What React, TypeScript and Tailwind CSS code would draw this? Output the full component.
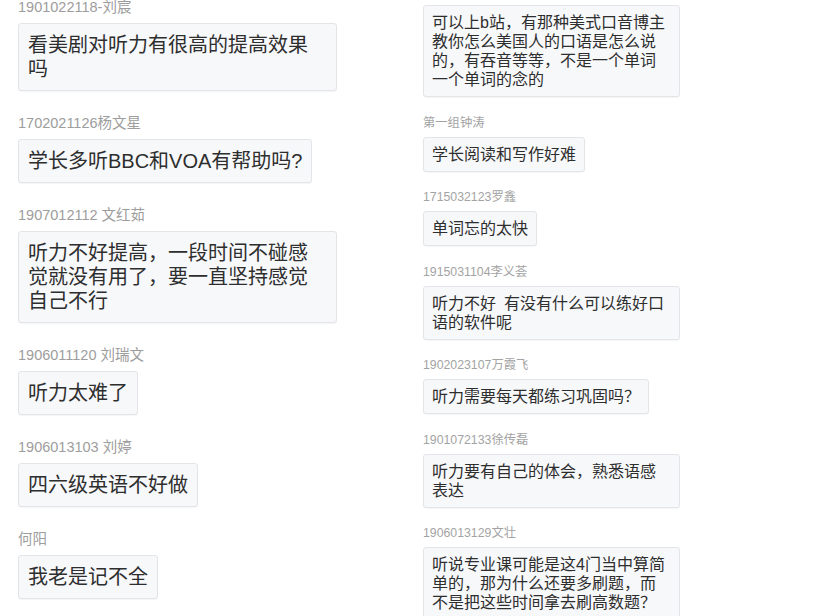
import React from "react";

const FONT = { fontFamily: '"Liberation Sans", "Noto Sans CJK SC", sans-serif' };

const left: { label: string; text: string }[] = [
  { label: "1901022118-刘宸", text: "看美剧对听力有很高的提高效果吗" },
  { label: "1702021126杨文星", text: "学长多听BBC和VOA有帮助吗?" },
  { label: "1907012112 文红茹", text: "听力不好提高，一段时间不碰感觉就没有用了，要一直坚持感觉自己不行" },
  { label: "1906011120 刘瑞文", text: "听力太难了" },
  { label: "1906013103 刘婷", text: "四六级英语不好做" },
  { label: "何阳", text: "我老是记不全" },
];

const right: { label?: string; text: string }[] = [
  { text: "可以上b站，有那种美式口音博主教你怎么美国人的口语是怎么说的，有吞音等等，不是一个单词一个单词的念的" },
  { label: "第一组钟涛", text: "学长阅读和写作好难" },
  { label: "1715032123罗鑫", text: "单词忘的太快" },
  { label: "1915031104李义荟", text: "听力不好\u2002有没有什么可以练好口语的软件呢" },
  { label: "1902023107万霞飞", text: "听力需要每天都练习巩固吗？" },
  { label: "1901072133徐传磊", text: "听力要有自己的体会，熟悉语感表达" },
  { label: "1906013129文壮", text: "听说专业课可能是这4门当中算简单的，那为什么还要多刷题，而不是把这些时间拿去刷高数题？" },
];

export default function App() {
  return (
    <div className="flex h-[616px] w-[821px] overflow-hidden bg-white" style={FONT}>
      <div className="flex w-[423px] shrink-0 flex-col pl-[18px] -mt-[3px]">
        {left.map((m, i) => (
          <div key={i} className="mb-[22px] flex flex-col items-start">
            <div className="mb-[6px] h-[20px] text-[14.5px] leading-[20px] text-[#9d9d9d] whitespace-nowrap">
              {m.label}
            </div>
            <div className="max-w-[319px] rounded-[3px] border border-[#e4e5e8] bg-[#f7f8fa] px-[9px] py-[9px] text-[20px] leading-[24px] text-[#2e2e2e] shadow-[0_1px_1px_rgba(0,0,0,0.04)]">
              {m.text}
            </div>
          </div>
        ))}
      </div>
      <div className="flex flex-col pt-[5px]">
        {right.map((m, i) => (
          <div key={i} className="mb-[17.5px] flex flex-col items-start">
            {m.label && (
              <div className="mb-[6px] h-[16px] text-[12.3px] leading-[16px] text-[#a3a3a3] whitespace-nowrap">
                {m.label}
              </div>
            )}
            <div className="max-w-[257px] rounded-[3px] border border-[#e4e5e8] bg-[#f7f8fa] px-[8px] py-[7px] text-[16px] leading-[19px] text-[#2e2e2e] shadow-[0_1px_1px_rgba(0,0,0,0.04)]">
              {m.text}
            </div>
          </div>
        ))}
      </div>
    </div>
  );
}
